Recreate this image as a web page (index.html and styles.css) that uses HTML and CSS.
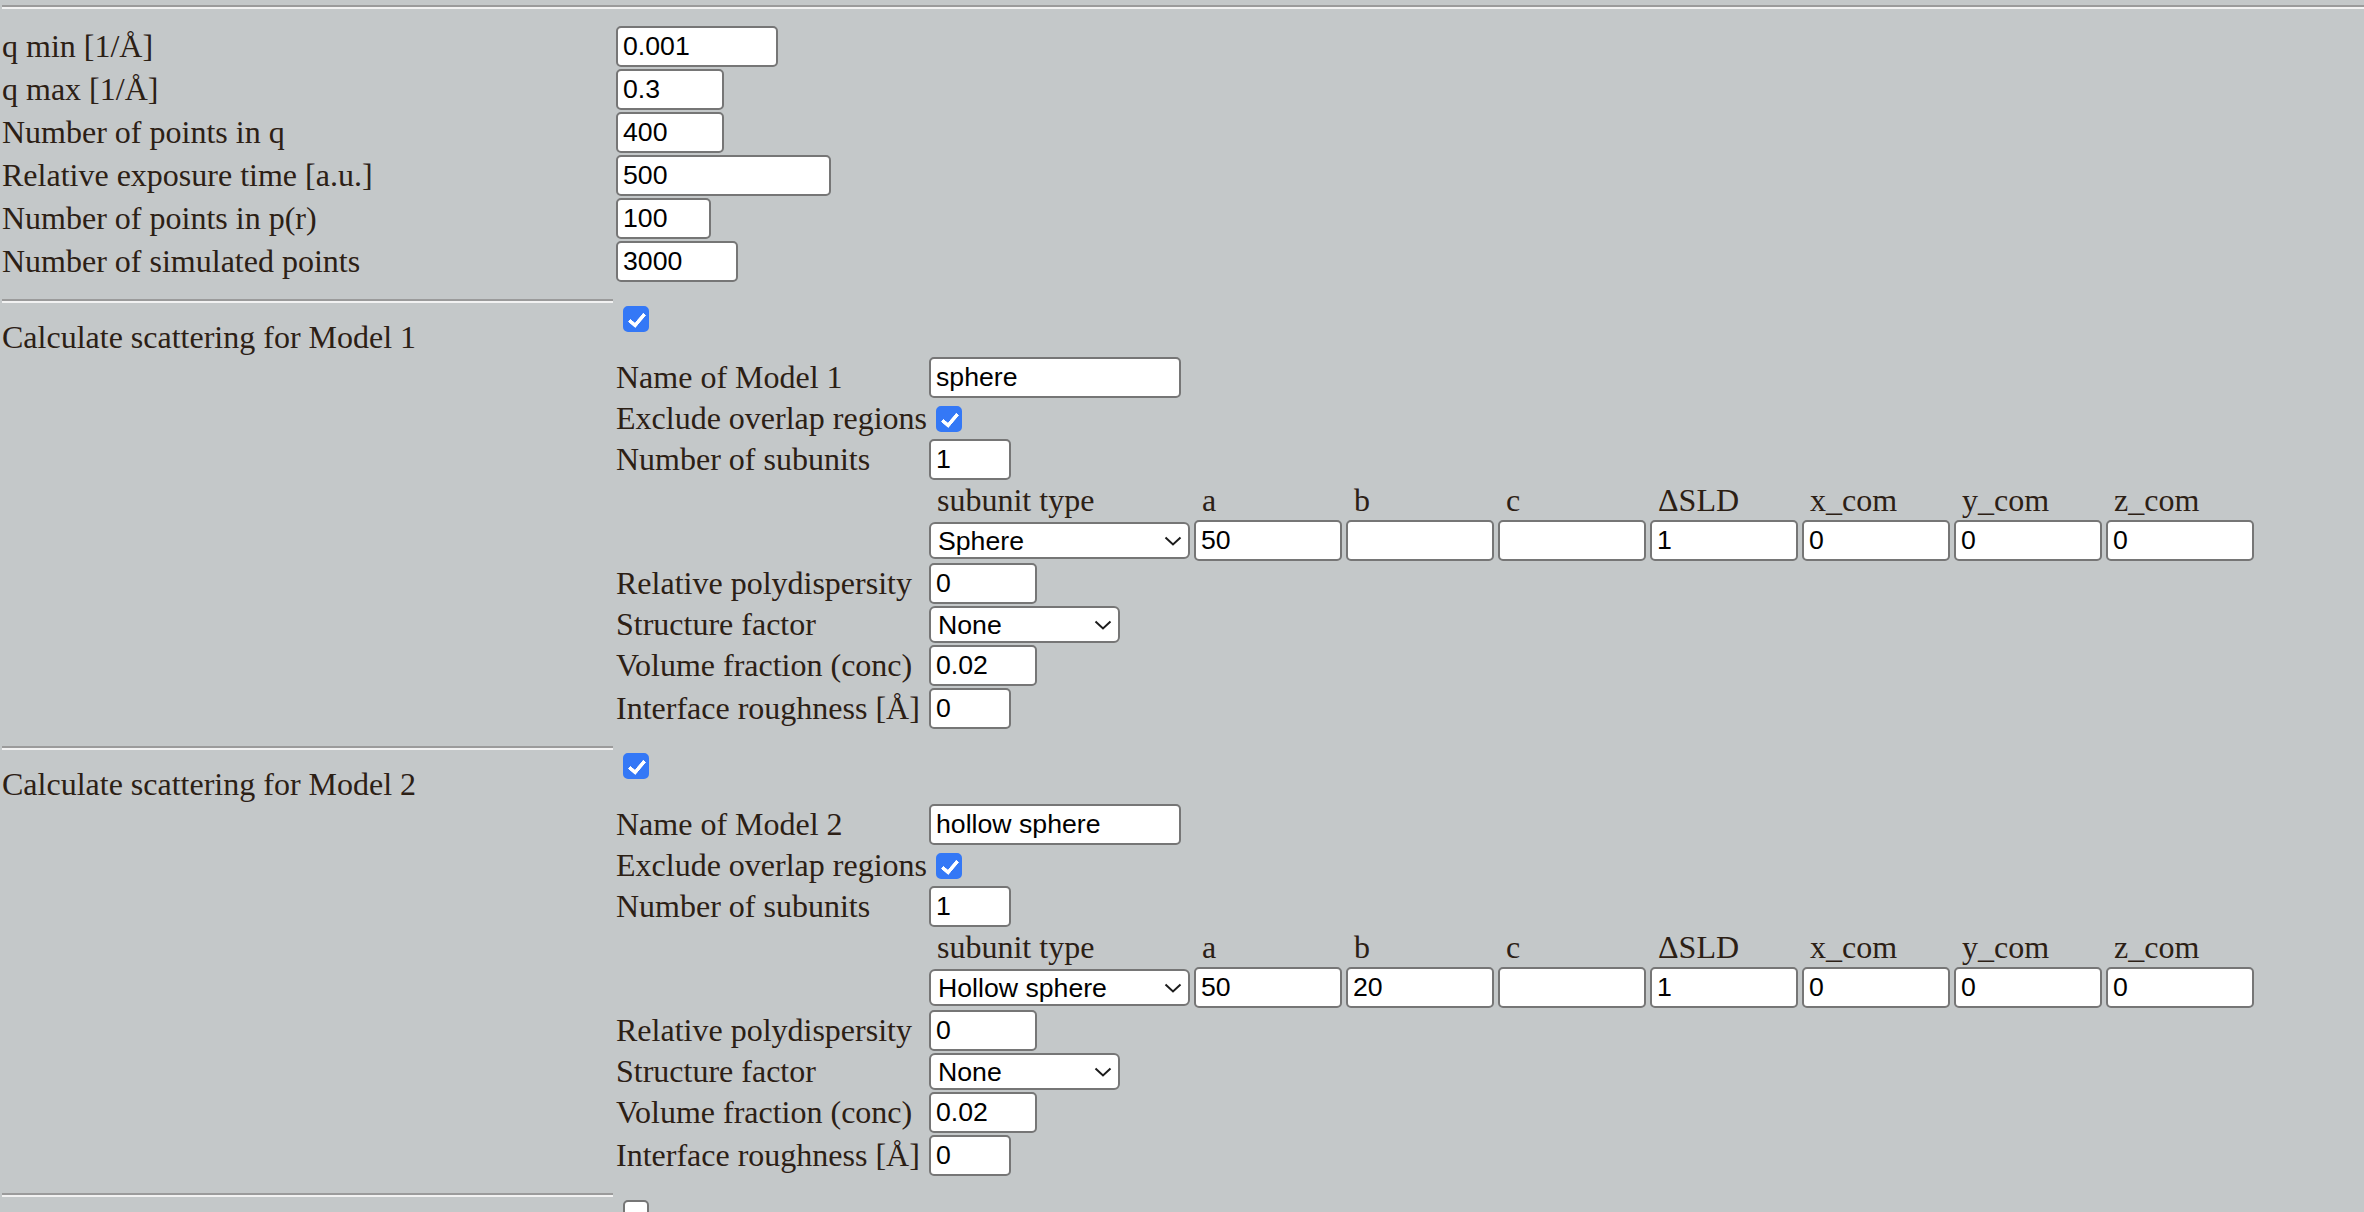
FILE: index.html
```html
<!DOCTYPE html>
<html lang="en">
<head>
<meta charset="utf-8">
<title>Scattering model parameters</title>
<link rel="stylesheet" href="styles.css">
</head>
<body>
<hr class="rule rule-top">

<div class="params">
  <div class="row"><label class="lbl">q min [1/Å]</label><input class="field w162" value="0.001"></div>
  <div class="row"><label class="lbl">q max [1/Å]</label><input class="field w108" value="0.3"></div>
  <div class="row"><label class="lbl">Number of points in q</label><input class="field w108" value="400"></div>
  <div class="row"><label class="lbl">Relative exposure time [a.u.]</label><input class="field w215" value="500"></div>
  <div class="row"><label class="lbl">Number of points in p(r)</label><input class="field w95" value="100"></div>
  <div class="row"><label class="lbl">Number of simulated points</label><input class="field w122" value="3000"></div>
</div>

<section class="model">
  <div class="model-head">
    <hr class="rule rule-col">
    <label class="lbl">Calculate scattering for Model 1</label>
  </div>
  <div class="model-body">
    <input type="checkbox" class="cb" checked>
    <div class="sub">
      <div class="row"><label class="lbl">Name of Model 1</label><input class="field w252" value="sphere"></div>
      <div class="row row-line"><label class="lbl">Exclude overlap regions</label><input type="checkbox" class="cb" checked></div>
      <div class="row"><label class="lbl">Number of subunits</label><input class="field w82" value="1"></div>
      <div class="units">
        <span class="uh">subunit type</span><span class="uh">a</span><span class="uh">b</span><span class="uh">c</span><span class="uh">ΔSLD</span><span class="uh">x_com</span><span class="uh">y_com</span><span class="uh">z_com</span>
        <span class="sel w261"><select><option>Sphere</option><option>Hollow sphere</option></select><svg class="chev" width="18" height="10" viewBox="0 0 18 10"><path d="M1.5 1.5 L9 8.5 L16.5 1.5" fill="none" stroke="#1c1c1c" stroke-width="2"/></svg></span>
        <input class="field" value="50"><input class="field" value=""><input class="field" value=""><input class="field" value="1"><input class="field" value="0"><input class="field" value="0"><input class="field" value="0">
      </div>
      <div class="row"><label class="lbl">Relative polydispersity</label><input class="field w108" value="0"></div>
      <div class="row row-line"><label class="lbl">Structure factor</label><span class="sel w191"><select><option>None</option></select><svg class="chev" width="18" height="10" viewBox="0 0 18 10"><path d="M1.5 1.5 L9 8.5 L16.5 1.5" fill="none" stroke="#1c1c1c" stroke-width="2"/></svg></span></div>
      <div class="row"><label class="lbl">Volume fraction (conc)</label><input class="field w108" value="0.02"></div>
      <div class="row"><label class="lbl">Interface roughness [Å]</label><input class="field w82" value="0"></div>
    </div>
  </div>
</section>

<section class="model">
  <div class="model-head">
    <hr class="rule rule-col">
    <label class="lbl">Calculate scattering for Model 2</label>
  </div>
  <div class="model-body">
    <input type="checkbox" class="cb" checked>
    <div class="sub">
      <div class="row"><label class="lbl">Name of Model 2</label><input class="field w252" value="hollow sphere"></div>
      <div class="row row-line"><label class="lbl">Exclude overlap regions</label><input type="checkbox" class="cb" checked></div>
      <div class="row"><label class="lbl">Number of subunits</label><input class="field w82" value="1"></div>
      <div class="units">
        <span class="uh">subunit type</span><span class="uh">a</span><span class="uh">b</span><span class="uh">c</span><span class="uh">ΔSLD</span><span class="uh">x_com</span><span class="uh">y_com</span><span class="uh">z_com</span>
        <span class="sel w261"><select><option>Hollow sphere</option><option>Sphere</option></select><svg class="chev" width="18" height="10" viewBox="0 0 18 10"><path d="M1.5 1.5 L9 8.5 L16.5 1.5" fill="none" stroke="#1c1c1c" stroke-width="2"/></svg></span>
        <input class="field" value="50"><input class="field" value="20"><input class="field" value=""><input class="field" value="1"><input class="field" value="0"><input class="field" value="0"><input class="field" value="0">
      </div>
      <div class="row"><label class="lbl">Relative polydispersity</label><input class="field w108" value="0"></div>
      <div class="row row-line"><label class="lbl">Structure factor</label><span class="sel w191"><select><option>None</option></select><svg class="chev" width="18" height="10" viewBox="0 0 18 10"><path d="M1.5 1.5 L9 8.5 L16.5 1.5" fill="none" stroke="#1c1c1c" stroke-width="2"/></svg></span></div>
      <div class="row"><label class="lbl">Volume fraction (conc)</label><input class="field w108" value="0.02"></div>
      <div class="row"><label class="lbl">Interface roughness [Å]</label><input class="field w82" value="0"></div>
    </div>
  </div>
</section>

<section class="model">
  <div class="model-head">
    <hr class="rule rule-col">
  </div>
  <div class="model-body">
    <input type="checkbox" class="cb">
  </div>
</section>
</body>
</html>
```

FILE: styles.css
```css
* {
  box-sizing: border-box;
}

html,
body {
  margin: 0;
  padding: 0;
}

body {
  background: #c4c8c9;
  color: #2c2015;
  font-family: "Liberation Serif", "Times New Roman", serif;
  font-size: 32px;
  line-height: normal;
}

.rule {
  display: block;
  height: 0;
  margin: 0 0 0 2px;
  border: 0;
  border-top: 2px solid #9b9b9b;
  border-bottom: 2px solid #f2f2f2;
}

.rule-top {
  margin-top: 5px;
}

.rule-col {
  width: 611px;
  margin-top: 17px;
}

.params {
  display: flex;
  flex-direction: column;
  gap: 2px;
  margin-top: 17px;
}

.row {
  display: flex;
  align-items: center;
  height: 41px;
}

.row-line {
  height: 37px;
}

.lbl {
  white-space: nowrap;
}

.params .lbl {
  width: 616px;
  flex: none;
  padding-left: 2px;
}

.field {
  display: block;
  flex: none;
  width: 148px;
  height: 41px;
  margin: 0;
  padding: 0 5px;
  border: 2px solid #767676;
  border-radius: 5px;
  background: #fff;
  color: #000;
  font-family: "Liberation Sans", Arial, sans-serif;
  font-size: 26.67px;
  outline: none;
}

.w82 { width: 82px; }
.w95 { width: 95px; }
.w108 { width: 108px; }
.w122 { width: 122px; }
.w162 { width: 162px; }
.w191 { width: 191px; }
.w215 { width: 215px; }
.w252 { width: 252px; }
.w261 { width: 261px; }

/* model sections */
.model {
  display: grid;
  grid-template-columns: 616px 1fr;
  align-items: start;
}

.model-head .lbl {
  display: block;
  margin-top: 16px;
  padding-left: 2px;
}

.model-body {
  padding-top: 24px;
}

.cb {
  appearance: none;
  -webkit-appearance: none;
  position: relative;
  display: block;
  flex: none;
  width: 26px;
  height: 26px;
  margin: 0 0 0 7px;
  border: 2px solid #767676;
  border-radius: 5px;
  background: #fff;
}

.cb:checked {
  border-color: #3478f6;
  background: #3478f6;
}

.cb:checked::after {
  content: "";
  position: absolute;
  left: 7px;
  top: 2px;
  width: 6px;
  height: 13px;
  border: solid #fff;
  border-width: 0 4px 4px 0;
  border-radius: 1px;
  transform: rotate(40deg);
}

.sub {
  display: flex;
  flex-direction: column;
  gap: 2px;
  margin-top: 25px;
}

.sub .lbl {
  width: 313px;
  flex: none;
}

.units {
  display: grid;
  grid-template-columns: 261px repeat(7, 148px);
  grid-template-rows: 36px 41px;
  column-gap: 4px;
  row-gap: 2px;
  margin-left: 313px;
  align-items: center;
}

.uh {
  padding-left: 8px;
  white-space: nowrap;
}

.sel {
  position: relative;
  display: block;
  flex: none;
  height: 37px;
}

.sel select {
  appearance: none;
  -webkit-appearance: none;
  display: block;
  width: 100%;
  height: 37px;
  margin: 0;
  padding: 0 30px 0 7px;
  border: 2px solid #767676;
  border-radius: 6px;
  background: #fff;
  color: #000;
  font-family: "Liberation Sans", Arial, sans-serif;
  font-size: 26.67px;
  outline: none;
}

.chev {
  position: absolute;
  right: 8px;
  top: 14px;
  pointer-events: none;
}
```
